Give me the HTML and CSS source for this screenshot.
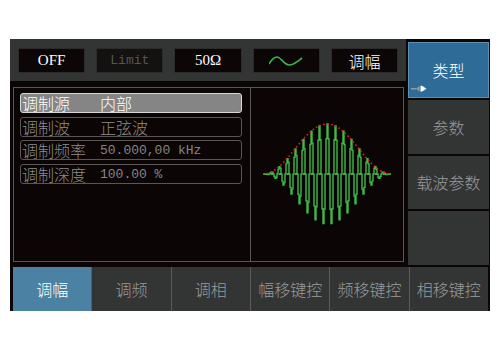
FILE: index.html
```html
<!DOCTYPE html>
<html lang="zh-CN">
<head>
    <meta charset="UTF-8">
    <meta name="viewport" content="width=device-width, initial-scale=1.0">
    <title>调幅</title>
    <link rel="stylesheet" href="styles.css">
</head>
<body>
    <div class="screen">
        <div class="upper">
            <div class="main">
                <div class="topbar">
                    <div class="box">OFF</div>
                    <div class="box dim">Limit</div>
                    <div class="box">50Ω</div>
                    <div class="box">
                        <svg class="sine" width="34" height="12" viewBox="0 0 34 12">
                            <path d="M0 9 C3 4 5 2 8 2 C12 2 15 10 20 10 C25 10 29 6 33 3" fill="none" stroke="#3db34a" stroke-width="1.6"/>
                        </svg>
                    </div>
                    <div class="box cjk">调幅</div>
                </div>
                <div class="frame">
                    <div class="params">
                        <div class="row sel"><span class="label">调制源</span><span class="val">内部</span></div>
                        <div class="row"><span class="label">调制波</span><span class="val">正弦波</span></div>
                        <div class="row"><span class="label">调制频率</span><span class="val num">50.000,00 kHz</span></div>
                        <div class="row"><span class="label">调制深度</span><span class="val num">100.00 %</span></div>
                    </div>
                    <div class="scope">
                        <svg class="wave" width="152" height="173" viewBox="0 0 152 173">
                            <line x1="12" y1="86" x2="140" y2="86" stroke="#ffffff" stroke-width="1" stroke-dasharray="2 6"/>
                            <path class="carrier" d="" fill="none" stroke="#3dbb48" stroke-width="1.4"/>
                            <path class="envelope" d="" fill="none" stroke="#e8201c" stroke-width="1.6" stroke-dasharray="1.5 2.5"/>
                        </svg>
                    </div>
                </div>
            </div>
            <div class="side">
                <div class="soft active">类型
                    <svg class="arrows" width="16" height="7" viewBox="0 0 16 7">
                        <rect x="0" y="3" width="5" height="1.5" fill="#9a9a9a"/>
                        <polygon points="5,3.7 8.5,0.8 8.5,6.6" fill="#9a9a9a"/>
                        <rect x="9.5" y="0.8" width="1.5" height="5.8" fill="#ffffff"/>
                        <polygon points="11,0.8 15.5,3.7 11,6.6" fill="#ffffff"/>
                    </svg>
                </div>
                <div class="soft">参数</div>
                <div class="soft">载波参数</div>
                <div class="soft"></div>
            </div>
        </div>
        <div class="tabs">
            <div class="tab active">调幅</div>
            <div class="tab">调频</div>
            <div class="tab">调相</div>
            <div class="tab">幅移键控</div>
            <div class="tab">频移键控</div>
            <div class="tab">相移键控</div>
        </div>
    </div>
    <script src="wave.js"></script>
</body>
</html>
```

FILE: styles.css
```css
body {
    margin: 0;
    padding: 39px 10px;
    background-color: #ffffff;
    font-family: "Noto Sans CJK SC", "Noto Sans", sans-serif;
    font-weight: 300;
}
.screen {
    width: 480px;
    height: 272px;
    background-color: #0c0505;
    display: flex;
    flex-direction: column;
}
.upper {
    height: 228px;
    display: flex;
}
.main {
    width: 396px;
}
.topbar {
    height: 42px;
    box-sizing: border-box;
    padding: 9px 8px 0;
    background-color: #333535;
    display: flex;
    gap: 11px;
}
.box {
    flex: 1;
    height: 25px;
    box-sizing: border-box;
    border: 1px solid #2b2b2b;
    background-color: #0c0606;
    color: #ffffff;
    font-family: "Liberation Serif", serif;
    font-size: 15px;
    font-weight: 400;
    display: flex;
    align-items: center;
    justify-content: center;
}
.box.dim {
    color: #555555;
    background-color: #141111;
    font-family: "Liberation Mono", monospace;
    font-size: 13px;
}
.box.cjk {
    font-family: "Noto Sans CJK SC", sans-serif;
    font-size: 16px;
    font-weight: 300;
}
.frame {
    margin: 6px 0 0 3px;
    width: 391px;
    height: 175px;
    box-sizing: border-box;
    border: 1px solid #5a5656;
    display: flex;
}
.params {
    width: 237px;
    box-sizing: border-box;
    border-right: 1px solid #5a5656;
    padding: 5px 8px 0 6px;
    display: flex;
    flex-direction: column;
    gap: 3.7px;
}
.row {
    height: 20px;
    box-sizing: border-box;
    border: 1px solid #5a5656;
    border-radius: 3px;
    color: #8c8c8c;
    font-size: 16px;
    line-height: 1;
    display: flex;
    align-items: center;
}
.row.sel {
    background-color: #858585;
    border-color: #d8d8d8;
    color: #ffffff;
}
.label {
    width: 78px;
    padding-left: 1px;
}
.val.num {
    font-family: "Liberation Mono", monospace;
    font-size: 13px;
    font-weight: 400;
    color: #858585;
}
.scope {
    flex: 1;
}
.wave {
    display: block;
}
.side {
    width: 84px;
    box-sizing: border-box;
    padding: 3px 1px 2px 2px;
    display: flex;
    flex-direction: column;
    gap: 2px;
}
.soft {
    flex: 1;
    position: relative;
    background-color: #333535;
    color: #9a9a9a;
    font-size: 16px;
    display: flex;
    align-items: center;
    justify-content: center;
}
.soft.active {
    background-color: #2f6b97;
    border: 1px solid #5b8fb6;
    color: #ffffff;
}
.arrows {
    position: absolute;
    left: 2px;
    bottom: 5px;
}
.tabs {
    height: 44px;
    padding: 0 2px 0 3px;
    display: flex;
}
.tab {
    flex: 1;
    background-color: #333535;
    border-left: 1px solid #5c5c5c;
    color: #9a9a9a;
    font-size: 16px;
    display: flex;
    align-items: center;
    justify-content: center;
}
.tab:first-child {
    border-left: none;
}
.tab.active {
    background-color: #4b82a3;
    color: #ffffff;
}
```

FILE: wave.js
```js
// AM waveform: carrier with a raised-cosine envelope, drawn as steps like the LCD
const carrier = document.querySelector('.carrier');
const envelope = document.querySelector('.envelope');
const mid = 86, centre = 76, half = 64, period = 8;

let d = '';
for (let x = centre - half; x <= centre + half; x++) {
    const a = 25 * (1 + Math.cos(Math.PI * (x - centre) / half));
    const y = (mid - a * Math.cos(2 * Math.PI * (x - centre) / period)).toFixed(1);
    d += d ? ` H${x} V${y}` : `M${x} ${y}`;
}
carrier.setAttribute('d', d);

let e = '';
for (let x = centre - half; x <= centre + half; x += 0.5) {
    const a = 25 * (1 + Math.cos(Math.PI * (x - centre) / half));
    e += (e ? ' L' : 'M') + `${x} ${(mid - a).toFixed(1)}`;
}
envelope.setAttribute('d', e);
```
